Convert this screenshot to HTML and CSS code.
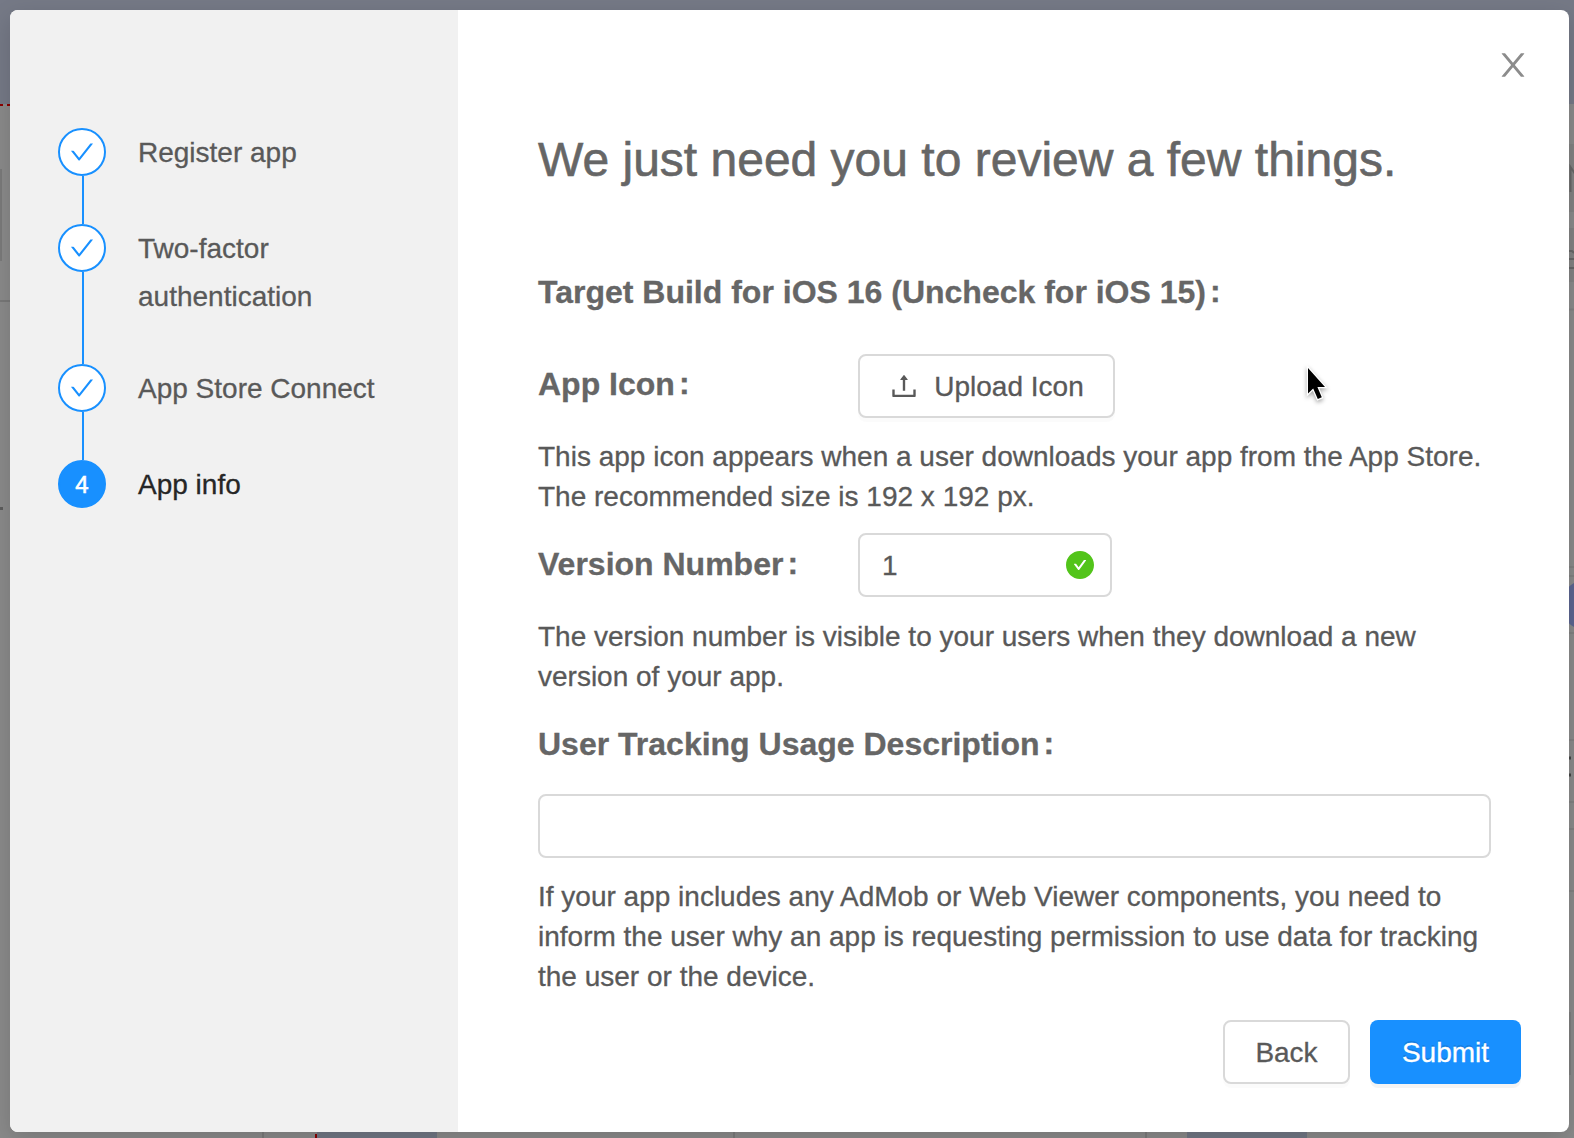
FILE: index.html
```html
<!DOCTYPE html>
<html lang="en">
<head>
<meta charset="utf-8">
<title>App info</title>
<link rel="stylesheet" href="styles.css">
</head>
<body>
<svg class="workspace" width="1574" height="1138" viewBox="0 0 1574 1138" aria-hidden="true">
  <rect width="1574" height="1138" fill="#8a8a8a"/>
  <rect width="1574" height="104" fill="#757986"/>
  <path d="M0 105h3M7 105h3" stroke="#8b0000" stroke-width="2"/>
  <path d="M0 169h2v92H0z" fill="#7a7a7a"/>
  <path d="M0 301h10" stroke="#787878" stroke-width="2"/>
  <path d="M0 508.500h3" stroke="#5c5c5c" stroke-width="3"/>
  <path d="M263 1130v8M734 1130v8M1146 1130v8" stroke="#7b7b7b" stroke-width="2"/>
  <path d="M316 1134v4" stroke="#8b0000" stroke-width="2"/>
  <path d="M317 1130h120v8H317zM1187 1130h120v8h-120z" fill="#717784"/>
  <path d="M1568 144h6v68h-6zM1568 228h6v54h-6z" fill="#828282"/>
  <path d="M1568 309.500h6M1568 567h6M1568 576h6M1568 633h6M1568 740h6M1568 802h6M1568 829h6M1568 891h6" stroke="#808080" stroke-width="2"/>
  <path d="M1568 1012h3v63h-3z" fill="#7e7e7e"/>
  <circle cx="1586" cy="605" r="25" fill="#5c6590"/>
  <path d="M1568 758h3M1568 775h3" stroke="#444" stroke-width="3"/>
  <path d="M1570.500 192v-25l8 12M1568 251h4l2 2M1568 259h6M1568 268h6" fill="none" stroke="#666" stroke-width="2"/>
</svg>
<div class="modal" role="dialog">
  <aside class="sidebar">
    <ol class="steps">
      <li class="step">
        <span class="step-icon"><svg viewBox="64 64 896 896"><use href="#check"/></svg></span>
        <span class="step-title">Register app</span>
      </li>
      <li class="step">
        <span class="step-icon"><svg viewBox="64 64 896 896"><use href="#check"/></svg></span>
        <span class="step-title">Two-factor<br>authentication</span>
      </li>
      <li class="step">
        <span class="step-icon"><svg viewBox="64 64 896 896"><use href="#check"/></svg></span>
        <span class="step-title">App Store Connect</span>
      </li>
      <li class="step step-active">
        <span class="step-icon">4</span>
        <span class="step-title">App info</span>
      </li>
    </ol>
  </aside>
  <main class="content">
    <button class="close" aria-label="Close"><svg viewBox="64 64 896 896"><path d="M563.800 512l262.500-312.900c4.400-5.200.7-13.100-6.100-13.100h-79.800c-4.700 0-9.200 2.100-12.300 5.700L511.600 449.800 295.100 191.700c-3-3.600-7.500-5.700-12.300-5.700H203c-6.800 0-10.500 7.900-6.100 13.100L459.400 512 196.900 824.900A7.950 7.950 0 00203 838h79.800c4.700 0 9.200-2.100 12.300-5.700l216.500-258.100 216.500 258.100c3 3.600 7.500 5.700 12.300 5.700h79.800c6.800 0 10.500-7.900 6.100-13.100L563.800 512z"/></svg></button>
    <h1 class="title">We just need you to review a few things.</h1>
    <div class="row row-target"><span class="label">Target Build for iOS 16 (Uncheck for iOS 15)</span><span class="colon">:</span></div>
    <div class="row row-control">
      <div class="label-cell"><span class="label">App Icon</span><span class="colon">:</span></div>
      <button class="btn btn-upload"><svg viewBox="64 64 896 896"><path d="M400 317.700h73.900V656c0 4.400 3.600 8 8 8h60c4.400 0 8-3.600 8-8V317.700H624c6.700 0 10.400-7.700 6.300-12.900L518.300 163a8 8 0 00-12.600 0l-112 141.700c-4.100 5.300-.4 13 6.300 13zM878 626h-60c-4.400 0-8 3.600-8 8v154H214V634c0-4.400-3.600-8-8-8h-60c-4.400 0-8 3.600-8 8v198c0 17.700 14.300 32 32 32h684c17.700 0 32-14.300 32-32V634c0-4.400-3.600-8-8-8z"/></svg><span class="btn-text">Upload Icon</span></button>
    </div>
    <p class="help help-icon">This app icon appears when a user downloads your app from the App Store.<br>The recommended size is 192 x 192 px.</p>
    <div class="row row-control">
      <div class="label-cell label-cell-version"><span class="label">Version Number</span><span class="colon">:</span></div>
      <div class="field field-version"><span class="field-value">1</span><svg viewBox="64 64 896 896"><path d="M512 64C264.600 64 64 264.600 64 512s200.600 448 448 448 448-200.600 448-448S759.400 64 512 64zm193.500 301.700l-210.600 292a31.800 31.800 0 01-51.700 0L318.500 484.900c-3.800-5.300 0-12.700 6.500-12.700h46.900c10.200 0 19.900 4.900 25.900 13.300l71.200 98.800 157.200-218c6-8.300 15.600-13.300 25.900-13.300H699c6.500 0 10.300 7.400 6.500 12.700z"/></svg></div>
    </div>
    <p class="help help-version">The version number is visible to your users when they download a new<br>version of your app.</p>
    <div class="row row-tracking"><span class="label">User Tracking Usage Description</span><span class="colon">:</span></div>
    <div class="field field-tracking"></div>
    <p class="help help-tracking">If your app includes any AdMob or Web Viewer components, you need to<br>inform the user why an app is requesting permission to use data for tracking<br>the user or the device.</p>
    <footer class="footer">
      <button class="btn btn-back"><span class="btn-text">Back</span></button>
      <button class="btn btn-primary"><span class="btn-text">Submit</span></button>
    </footer>
  </main>
</div>
<svg class="pointer" viewBox="0 0 30 42" aria-hidden="true"><path d="M5 4v25.500l5.200-5 4.600 10.500 4-1.700-4.400-10.300h7.600z"/></svg>
<svg width="0" height="0" class="symbols"><defs><path id="check" d="M912 190h-69.900c-9.800 0-19.100 4.500-25.100 12.200L404.700 724.500 207 474a32 32 0 00-25.100-12.200H112c-6.700 0-10.400 7.700-6.300 12.900l273.900 347c12.800 16.200 37.400 16.200 50.300 0l488.400-618.900c4.100-5.100.4-12.800-6.300-12.800z"/></defs></svg>
</body>
</html>
```
FILE: styles.css
```css
* { box-sizing: border-box; }

body {
  margin: 0;
  height: 1138px;
  overflow: hidden;
  padding: 10px 5px 6px 10px;
  font-family: "Liberation Sans", Arial, sans-serif;
  font-size: 28px;
  color: #595959;
  -webkit-text-stroke: .3px currentColor;
}

button { font: inherit; letter-spacing: inherit; cursor: pointer; }

.workspace { position: absolute; inset: 0; z-index: -1; }
.symbols { position: absolute; }

.modal {
  display: flex;
  height: 1122px;
  border-radius: 8px;
  background: #fff;
  overflow: hidden;
  box-shadow: 0 8px 24px rgba(0, 0, 0, .15);
}

.sidebar { width: 448px; padding: 118px 0 0 48px; background: #f1f1f1; }

.steps { margin: 0; padding: 0; list-style: none; }

.step {
  display: grid;
  grid-template-columns: 48px 1fr;
  grid-template-rows: 48px 1fr;
  column-gap: 32px;
  height: 96px;
}

.step:nth-child(2) { height: 140px; }

.step::after {
  content: "";
  grid-column: 1;
  grid-row: 2;
  justify-self: center;
  margin-left: 2px;
  width: 2px;
  background: #1890ff;
}

.step-active::after { display: none; }

.step-icon {
  display: flex;
  align-items: center;
  justify-content: center;
  height: 48px;
  border: 2px solid #1890ff;
  border-radius: 50%;
  background: #fff;
  font-size: 24px;
}

.step-icon svg { width: 24px; height: 24px; fill: #1890ff; }
.step-title { grid-column: 2; grid-row: 1 / 3; padding-top: 1px; line-height: 48px; }
.step:nth-child(2) .step-title { height: 97px; }
.step-active .step-icon { background: #1890ff; color: #fff; padding-top: 1px; -webkit-text-stroke-width: .6px; }
.step-active .step-title { color: #262626; }

.content { position: relative; flex: 1; padding: 114px 48px 0 80px; }

.close {
  position: absolute;
  top: 39px;
  right: 40px;
  width: 32px;
  height: 32px;
  padding: 0;
  border: 0;
  background: none;
}

.close svg { display: block; width: 32px; height: 32px; fill: #8c8c8c; }

.title { margin: 0; font-size: 48px; font-weight: 400; line-height: 72px; color: #666; white-space: nowrap; -webkit-text-stroke-width: .6px; }

.row { display: flex; color: #666; font-size: 32px; font-weight: 700; line-height: 64px; white-space: nowrap; }
.row-target { margin-top: 64px; }
.row-control { margin-top: 30px; }
.label-cell { display: flex; width: 320px; height: 64px; line-height: 60px; }
.label-cell-version { padding-top: 1px; }
.colon { margin-left: 4px; margin-top: -1px; }

.btn, .field {
  height: 64px;
  border: 2px solid #d9d9d9;
  border-radius: 8px;
  background: #fff;
  color: #595959;
  font-size: 28px;
  font-weight: 400;
}

.btn { display: flex; align-items: center; justify-content: center; padding: 0; box-shadow: 0 4px 0 rgba(0, 0, 0, .016); }
.btn-text, .field-value { padding-top: 2px; }
.btn-upload { width: 257px; gap: 16px; padding-left: 1px; }
.btn-upload svg { width: 28px; height: 28px; fill: #595959; }
.field-version { display: flex; align-items: center; justify-content: space-between; width: 254px; padding: 0 16px 0 22px; }
.field-version svg { width: 28px; height: 28px; fill: #52c41a; }

.help { margin: 19px 0 0; line-height: 40px; white-space: nowrap; }
.help + .row-control { margin-top: 16px; }
.help-version { margin-top: 20px; }
.row-tracking { margin-top: 15px; }
.field-tracking { width: 953px; margin-top: 18px; }

.footer { display: flex; justify-content: flex-end; gap: 20px; margin-top: 23px; }
.btn-back { width: 127px; }
.btn-primary { width: 151px; border: 0; background: #1890ff; color: #fff; box-shadow: 0 4px 0 rgba(0, 0, 0, .045); text-shadow: 0 -2px 0 rgba(0, 0, 0, .12); }

.pointer {
  position: absolute;
  left: 1303px;
  top: 364px;
  width: 30px;
  height: 42px;
  overflow: visible;
  stroke: #fff;
  stroke-width: 2.5px;
  paint-order: stroke;
  filter: drop-shadow(0 2px 2px rgba(0, 0, 0, .35));
}
```
